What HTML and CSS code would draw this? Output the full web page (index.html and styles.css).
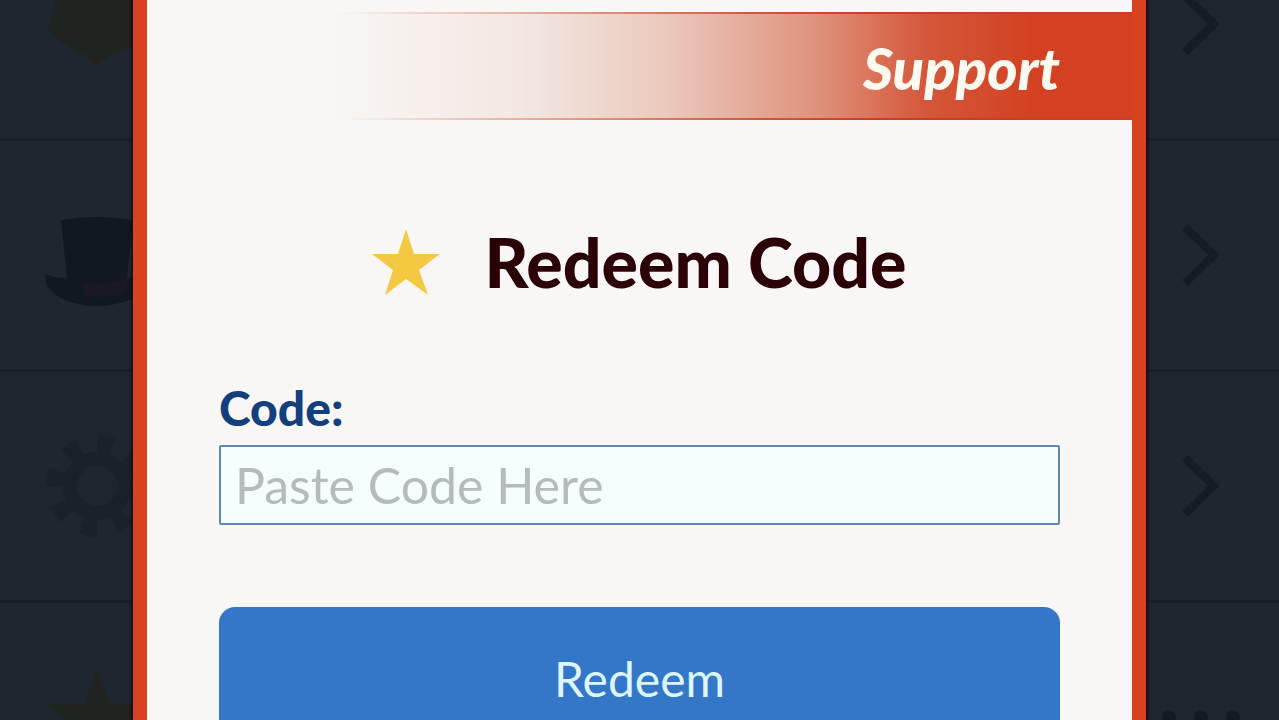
FILE: index.html
```
<!DOCTYPE html>
<html lang="en">
<head>
  <meta charset="UTF-8">
  <meta name="viewport" content="width=device-width, initial-scale=1.0">
  <title>Redeem Code</title>
  <link rel="stylesheet" href="styles.css">
</head>
<body>
  <!-- menu behind the popup -->
  <ul class="menu" aria-hidden="true">
    <li class="menu-row">
      <svg class="menu-icon" viewBox="0 0 106 106"><path class="gold" d="M18 6H88L100 62L82 78L66 84L53 95L40 84L24 76L4 60Z"/></svg>
      <svg class="chevron" viewBox="0 0 40 64"><path d="M4 4L33 32L4 60"/></svg>
    </li>
    <li class="menu-row">
      <svg class="menu-icon" viewBox="0 0 106 106"><path class="hat" d="M17 18Q53 12 89 18L83 76Q98 76 104 72Q108 86 90 96Q53 112 16 96Q-2 84 2 72Q8 76 23 76Z"/><path class="band" d="M40 80Q60 84 84 76L83 91Q60 98 40 94Z"/></svg>
      <svg class="chevron" viewBox="0 0 40 64"><path d="M4 4L33 32L4 60"/></svg>
    </li>
    <li class="menu-row">
      <svg class="menu-icon" viewBox="0 0 106 106"><circle class="gear" cx="53" cy="53" r="27"/><circle class="gear teeth" cx="53" cy="53" r="42"/></svg>
      <svg class="chevron" viewBox="0 0 40 64"><path d="M4 4L33 32L4 60"/></svg>
    </li>
    <li class="menu-row">
      <svg class="menu-icon" viewBox="0 0 106 106"><path class="gold" d="M53 5L66 40H104L74 63L85 100L53 78L21 100L32 63L2 40H40Z"/></svg>
      <svg class="dots" viewBox="0 0 80 16"><circle cx="8" cy="8" r="7"/><circle cx="40" cy="8" r="7"/><circle cx="72" cy="8" r="7"/></svg>
    </li>
  </ul>

  <div class="overlay">
    <div class="popup" role="dialog" aria-labelledby="popupTitle">
      <div class="banner">Support</div>
      <form class="content">
        <h1 id="popupTitle">
          <svg class="star" viewBox="0 0 68 66" aria-hidden="true"><path d="M34 0L42 25H68L47 41L56 66L34 50L13 66L21 41L0 25H26Z"/></svg>
          Redeem Code
        </h1>
        <label for="codeInput">Code:</label>
        <input type="text" id="codeInput" placeholder="Paste Code Here">
        <button type="button">Redeem</button>
      </form>
    </div>
  </div>
</body>
</html>
```
FILE: styles.css
```
* {
  margin: 0;
  padding: 0;
  box-sizing: border-box;
  font-family: Lato, sans-serif;
}

body {
  background: #1f262f;
  height: 100vh;
  overflow: hidden;
}

.menu {
  list-style: none;
  margin-top: -90px;
}

.menu-row {
  height: 231px;
  padding: 0 58px 0 44px;
  border-bottom: 3px solid #19202a;
  display: flex;
  align-items: center;
  justify-content: space-between;
}

.menu-row:last-child {
  padding-right: 38px;
}

.menu-icon {
  width: 106px;
  height: 106px;
}

.gold {
  fill: #1f2420;
}

.hat {
  fill: #111822;
}

.band {
  fill: #1a1822;
}

.gear {
  fill: none;
  stroke: #1a212b;
  stroke-width: 14;
}

.teeth {
  stroke-width: 18;
  stroke-dasharray: 15 18;
}

.chevron {
  width: 40px;
  height: 64px;
  fill: none;
  stroke: #151c26;
  stroke-width: 8;
}

.dots {
  width: 80px;
  height: 16px;
  fill: #131a24;
}

.overlay {
  position: absolute;
  inset: 0;
  padding: 0 133px;
}

.popup {
  height: 100%;
  padding-top: 12px;
  background: #f8f7f5;
  border: solid #d94220;
  border-width: 0 14px;
  box-shadow: 0 0 3px 1px #0c0507;
  overflow: hidden;
}

.banner {
  padding: 4px 72px 0;
  border: solid;
  border-width: 2px 0;
  border-image: linear-gradient(to right, rgba(204, 62, 32, 0) 20%, #cc3e20 75%) 2;
  background: linear-gradient(to right, #f8f7f5 18%, #f3e7e2 38%, #ebc8bc 53%, #df927c 68%, #d4573a 79%, #d34122 90%);
  color: #fffaf0;
  font-size: 58px;
  font-weight: 900;
  font-style: italic;
  line-height: 100px;
  text-align: right;
}

.content {
  padding: 96px 72px 0;
  display: flex;
  flex-direction: column;
}

h1 {
  display: flex;
  align-items: center;
  justify-content: center;
  gap: 44px;
  color: #2c0007;
  font-size: 68px;
  font-weight: 900;
  line-height: 92px;
}

.star {
  width: 68px;
  height: 66px;
  fill: #f5c842;
}

label {
  margin-top: 74px;
  color: #123f7d;
  font-size: 48px;
  font-weight: 900;
  line-height: 52px;
}

input {
  margin-top: 11px;
  height: 80px;
  padding: 0 14px;
  border: 2px solid #6089b2;
  border-radius: 2px;
  background: #f5fcfe;
  font-size: 50px;
}

input::placeholder {
  color: #b6babc;
}

button {
  margin-top: 82px;
  height: 146px;
  padding-bottom: 4px;
  border: none;
  border-radius: 16px;
  background: #3476c8;
  color: #dcf5ff;
  font-size: 48px;
  cursor: pointer;
}
```
